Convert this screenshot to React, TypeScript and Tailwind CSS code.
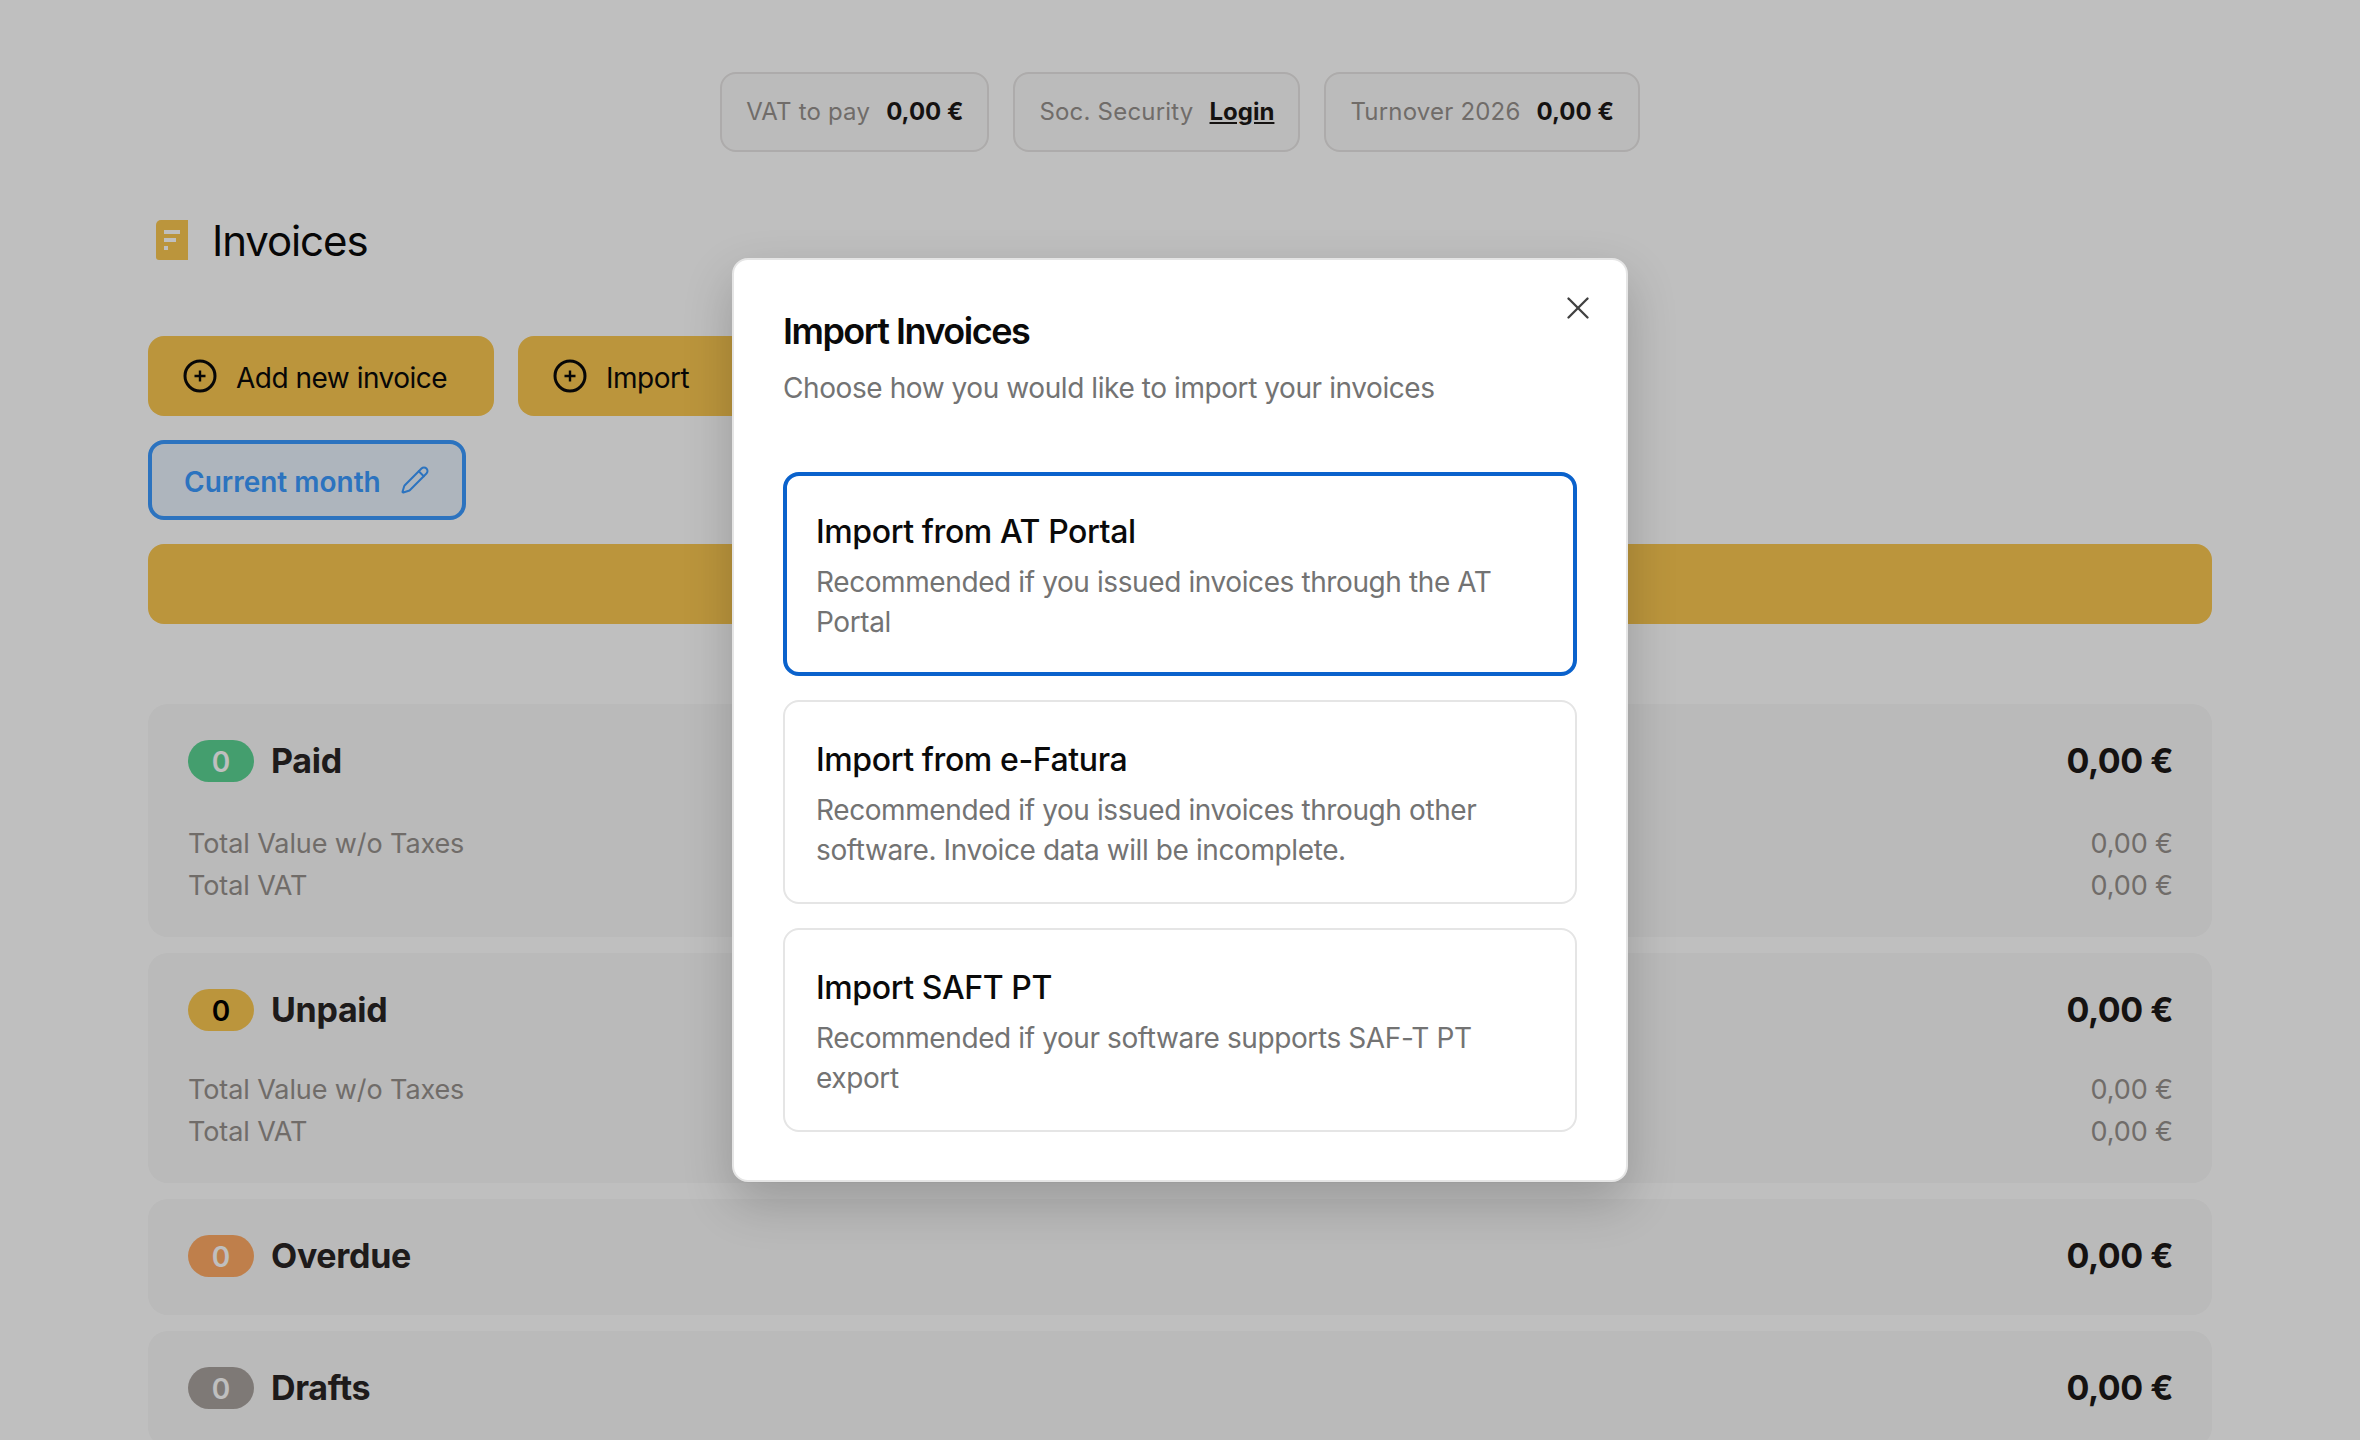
import { Pencil, X } from "lucide-react";

const font = { fontFamily: "Inter, 'Noto Sans', sans-serif" };

const chip = "flex items-center gap-4 h-20 px-6 rounded-[16px] border-2 border-[#e7e5e4] bg-[#fafafa]";
const chipLabel = "text-[24px] leading-none tracking-[0.2px] text-[#96918d]";
const chipValue = "text-[24px] font-bold text-[#1c1917]";

// Circle with a small plus, the lucide one has a longer cross
const PlusCircle = () => (
  <svg viewBox="0 0 34 34" className="w-[34px] h-[34px] shrink-0" fill="none" stroke="currentColor" strokeWidth="3">
    <circle cx="17" cy="17" r="15" />
    <path d="M17 11.5v11M11.5 17h11" strokeWidth="2.4" />
  </svg>
);

const DocIcon = () => (
  <svg viewBox="0 0 32 40" className="w-8 h-10 shrink-0">
    <path d="M5 0h27v40H3a3 3 0 0 1-3-3V5a5 5 0 0 1 5-5z" fill="#fac750" />
    <path d="M8 10h16v4H8zM8 18h12v4H8zM8 26h4v4H8z" fill="#ffffff" />
  </svg>
);

const Row = ({ label, badge, badgeText }: { label: string; badge: string; badgeText: string }) => (
  <div className="flex items-center justify-between">
    <div className="flex items-center gap-[17px]">
      <span className={`flex items-center justify-center w-[66px] h-[42px] rounded-full text-[28px] font-semibold pt-[2px] ${badge} ${badgeText}`}>0</span>
      <span className="text-[34px] font-bold leading-[40px] tracking-[-0.3px] text-[#292524]">{label}</span>
    </div>
    <span className="text-[34px] font-bold leading-[40px] tracking-[-0.5px] text-[#1c1917]">0,00 €</span>
  </div>
);

const Details = ({ className }: { className: string }) => (
  <div className={`flex justify-between text-[27px] leading-[42px] tracking-[-0.1px] text-[#96918d] ${className}`}>
    <div>
      <div>Total Value w/o Taxes</div>
      <div>Total VAT</div>
    </div>
    <div className="text-right">
      <div>0,00 €</div>
      <div>0,00 €</div>
    </div>
  </div>
);

const ImportOption = ({ title, text, selected }: { title: string; text: string; selected?: boolean }) => (
  <div className={`rounded-[16px] bg-white flex flex-col justify-center h-[204px] pt-[6px] ${selected ? "border-4 border-[#0a62cc] px-[29px]" : "border-2 border-[#e5e5e5] px-[31px]"}`}>
    <div className="text-[32px] font-medium leading-[40px] tracking-[-0.4px] text-[#0a0a0a]">{title}</div>
    <div className="mt-[10px] text-[28px] leading-[40px] tracking-[-0.4px] text-[#737373]">{text}</div>
  </div>
);

export default function App() {
  return (
    <div style={font} className="relative h-[1440px] w-[2360px] overflow-hidden bg-white">
      <div className="px-[148px] pt-[72px]">
        <div className="flex justify-center gap-6">
          <div className={chip}>
            <span className={chipLabel}>VAT to pay</span>
            <span className={chipValue}>0,00 €</span>
          </div>
          <div className={chip}>
            <span className={chipLabel}>Soc. Security</span>
            <span className={`${chipValue} underline`}>Login</span>
          </div>
          <div className={chip}>
            <span className={chipLabel}>Turnover 2026</span>
            <span className={chipValue}>0,00 €</span>
          </div>
        </div>

        <div className="mt-[68px] flex items-center gap-6 pl-2 h-10">
          <DocIcon />
          <h1 className="text-[42px] font-normal leading-none pt-[2px] tracking-[-1.1px] text-[#0a0a0a]">Invoices</h1>
        </div>

        <div className="mt-[76px] flex gap-6">
          <button className="flex items-center gap-[19px] h-20 w-[346px] pl-[35px] rounded-[16px] bg-[#fac750] text-[28px] tracking-[-0.5px] text-[#0a0a0a]">
            <PlusCircle />
            <span className="pt-[3px]">Add new invoice</span>
          </button>
          <button className="flex items-center gap-[19px] h-20 w-[300px] pl-[35px] rounded-[16px] bg-[#fac750] text-[28px] tracking-[-0.5px] text-[#0a0a0a]">
            <PlusCircle />
            <span className="pt-[3px]">Import</span>
          </button>
        </div>

        <button className="mt-6 flex items-center gap-[19px] h-20 w-[318px] pl-[32px] rounded-[16px] border-4 border-[#3b9aff] bg-[#e9f2fc] text-[28px] font-semibold text-[#3b9aff]">
          <span className="pt-[3px]">Current month</span>
          <Pencil className="w-[30px] h-[30px]" strokeWidth={1.6} />
        </button>

        <div className="mt-6 h-20 rounded-[16px] bg-[#fac750]" />

        <div className="mt-20 flex flex-col gap-4">
          <div className="h-[233px] rounded-[20px] bg-[#f8f8f8] pl-10 pr-[39px] pt-9">
            <Row label="Paid" badge="bg-[#5bd393]" badgeText="text-white" />
            <Details className="mt-[41px]" />
          </div>
          <div className="h-[230px] rounded-[20px] bg-[#f8f8f8] pl-10 pr-[39px] pt-9">
            <Row label="Unpaid" badge="bg-[#fac750]" badgeText="text-black" />
            <Details className="mt-[38px]" />
          </div>
          <div className="h-[116px] rounded-[20px] bg-[#f8f8f8] pl-10 pr-[39px] pt-9">
            <Row label="Overdue" badge="bg-[#ffaa64]" badgeText="text-white" />
          </div>
          <div className="h-[116px] rounded-[20px] bg-[#f8f8f8] pl-10 pr-[39px] pt-9">
            <Row label="Drafts" badge="bg-[#a9a29e]" badgeText="text-white" />
          </div>
        </div>
      </div>

      {/* dimmed backdrop + import dialog */}
      <div className="absolute inset-0 bg-black/25">
        <div className="absolute left-[732px] top-[258px] w-[896px] h-[924px] rounded-[16px] border-2 border-[#e5e5e5] bg-white px-[49px] pt-[47px] shadow-[0_20px_50px_rgba(0,0,0,0.2)]">
          <X className="absolute right-[29px] top-[29px] w-[38px] h-[38px] text-[#404040]" strokeWidth={1.5} />
          <h2 className="text-[36px] font-semibold leading-[48px] tracking-[-1.5px] text-[#0a0a0a]">Import Invoices</h2>
          <p className="mt-[13px] text-[28px] leading-[40px] tracking-[-0.42px] text-[#737373]">Choose how you would like to import your invoices</p>
          <div className="mt-[64px] flex flex-col gap-6">
            <ImportOption selected title="Import from AT Portal" text="Recommended if you issued invoices through the AT Portal" />
            <ImportOption title="Import from e-Fatura" text="Recommended if you issued invoices through other software. Invoice data will be incomplete." />
            <ImportOption title="Import SAFT PT" text="Recommended if your software supports SAF-T PT export" />
          </div>
        </div>
      </div>
    </div>
  );
}
